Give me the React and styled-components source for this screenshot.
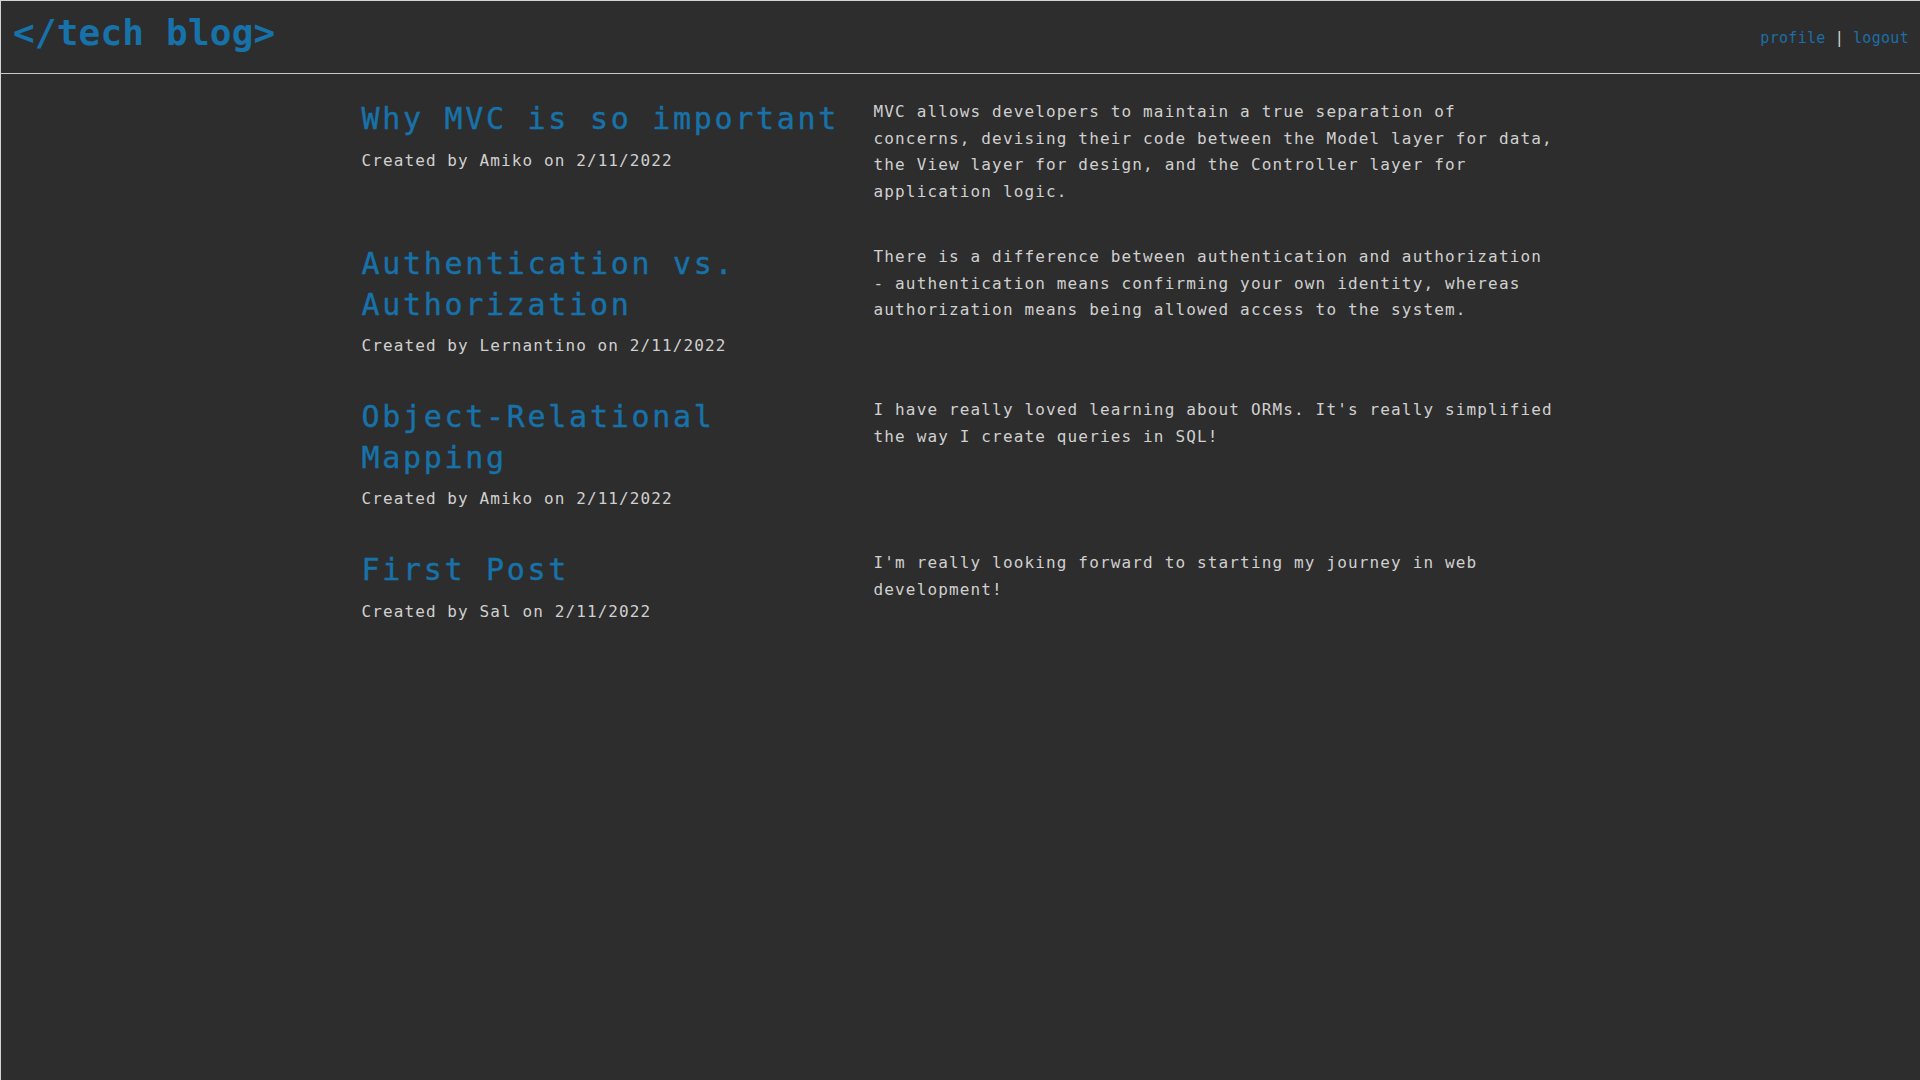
import React from "react";
import styled, { createGlobalStyle } from "styled-components";

const GlobalStyle = createGlobalStyle`
  html, body {
    margin: 0;
    padding: 0;
    background: #2d2d2d;
  }
  body {
    font-family: "DejaVu Sans Mono", "Liberation Mono", monospace;
    color: #cfcfcf;
  }
  * { box-sizing: border-box; }
`;

const Page = styled.div`
  min-height: 1080px;
  background: #2d2d2d;
  border-top: 1px solid #d4d4d4;
  border-left: 1px solid #d4d4d4;
`;

const Header = styled.header`
  height: 73px;
  display: flex;
  justify-content: space-between;
  align-items: center;
  padding: 2px 11px 0 12px;
  border-bottom: 1px solid #c9c9c9;
`;

const Logo = styled.a`
  font-family: "DejaVu Sans Mono", monospace;
  font-weight: bold;
  font-size: 36px;
  line-height: 36px;
  letter-spacing: 0.2px;
  color: #1872aa;
  text-decoration: none;
  margin-bottom: 11px;
`;

const Nav = styled.nav`
  font-size: 15px;
  letter-spacing: 0.3px;
  color: #d8d8d8;
  display: flex;
  gap: 9px;
`;

const NavLink = styled.a`
  color: #1c6ea6;
  text-decoration: none;
`;

const Main = styled.main`
  width: 1196px;
  margin: 0 auto;
  padding-top: 25px;
  display: flex;
  flex-direction: column;
  gap: 39px;
`;

const PostRow = styled.article`
  display: grid;
  grid-template-columns: 490px 685px;
  column-gap: 21px;
  align-items: start;
`;

const TitleBlock = styled.div`
  display: flex;
  flex-direction: column;
  padding-bottom: 3px;
`;

const PostTitle = styled.h2`
  margin: 0 0 0 -1px;
  font-family: "DejaVu Sans Mono", monospace;
  font-weight: normal;
  font-size: 30px;
  line-height: 40.5px;
  letter-spacing: 2.7px;
  color: #1872aa;
  -webkit-text-stroke: 0.4px #1872aa;
`;

const Meta = styled.p`
  margin: 11px 0 0 -1px;
  font-size: 16px;
  letter-spacing: 1.1px;
  color: #d0d0d0;
`;

const Body = styled.p`
  margin: 0;
  font-size: 16px;
  line-height: 26.5px;
  letter-spacing: 1.15px;
  color: #d0d0d0;
`;

const posts = [
  {
    title: "Why MVC is so important",
    author: "Amiko",
    date: "2/11/2022",
    body:
      "MVC allows developers to maintain a true separation of concerns, devising their code between the Model layer for data, the View layer for design, and the Controller layer for application logic.",
  },
  {
    title: "Authentication vs. Authorization",
    author: "Lernantino",
    date: "2/11/2022",
    body:
      "There is a difference between authentication and authorization - authentication means confirming your own identity, whereas authorization means being allowed access to the system.",
  },
  {
    title: "Object-Relational Mapping",
    author: "Amiko",
    date: "2/11/2022",
    body:
      "I have really loved learning about ORMs. It's really simplified the way I create queries in SQL!",
  },
  {
    title: "First Post",
    author: "Sal",
    date: "2/11/2022",
    body:
      "I'm really looking forward to starting my journey in web development!",
  },
];

export default function App() {
  return (
    <>
      <GlobalStyle />
      <Page>
        <Header>
          <Logo href="#">&lt;/tech blog&gt;</Logo>
          <Nav>
            <NavLink href="#">profile</NavLink>
            <span>|</span>
            <NavLink href="#">logout</NavLink>
          </Nav>
        </Header>
        <Main>
          {posts.map((p) => (
            <PostRow key={p.title}>
              <TitleBlock>
                <PostTitle>{p.title}</PostTitle>
                <Meta>
                  Created by {p.author} on {p.date}
                </Meta>
              </TitleBlock>
              <Body>{p.body}</Body>
            </PostRow>
          ))}
        </Main>
      </Page>
    </>
  );
}
